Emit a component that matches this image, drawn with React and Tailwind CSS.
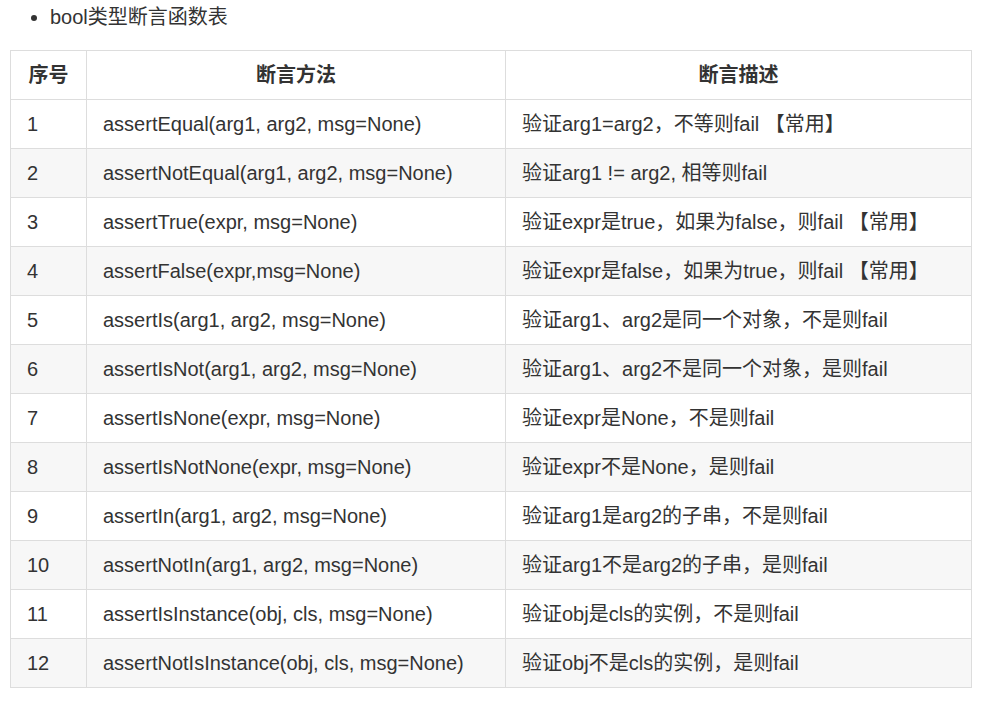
const rows = [
  ["1", "assertEqual(arg1, arg2, msg=None)", "验证arg1=arg2，不等则fail 【常用】"],
  ["2", "assertNotEqual(arg1, arg2, msg=None)", "验证arg1 != arg2, 相等则fail"],
  ["3", "assertTrue(expr, msg=None)", "验证expr是true，如果为false，则fail 【常用】"],
  ["4", "assertFalse(expr,msg=None)", "验证expr是false，如果为true，则fail 【常用】"],
  ["5", "assertIs(arg1, arg2, msg=None)", "验证arg1、arg2是同一个对象，不是则fail"],
  ["6", "assertIsNot(arg1, arg2, msg=None)", "验证arg1、arg2不是同一个对象，是则fail"],
  ["7", "assertIsNone(expr, msg=None)", "验证expr是None，不是则fail"],
  ["8", "assertIsNotNone(expr, msg=None)", "验证expr不是None，是则fail"],
  ["9", "assertIn(arg1, arg2, msg=None)", "验证arg1是arg2的子串，不是则fail"],
  ["10", "assertNotIn(arg1, arg2, msg=None)", "验证arg1不是arg2的子串，是则fail"],
  ["11", "assertIsInstance(obj, cls, msg=None)", "验证obj是cls的实例，不是则fail"],
  ["12", "assertNotIsInstance(obj, cls, msg=None)", "验证obj不是cls的实例，是则fail"],
];

export default function App() {
  return (
    <div
      className="bg-white text-[#333] min-h-screen"
      style={{ fontFamily: '"Liberation Sans", Arial, "Noto Sans CJK SC", sans-serif' }}
    >
      <ul className="list-disc pl-[50px] pt-[3px] text-[20px] leading-[28px]">
        <li>bool类型断言函数表</li>
      </ul>
      <div className="px-[10px] pt-[19px]">
        <table className="w-[962px] border-collapse text-[20px] border border-[#ddd]">
          <thead>
            <tr className="h-[49px]">
              <th className="w-[76px] border border-[#ddd] font-bold text-center">序号</th>
              <th className="w-[419px] border border-[#ddd] font-bold text-center">断言方法</th>
              <th className="border border-[#ddd] font-bold text-center">断言描述</th>
            </tr>
          </thead>
          <tbody>
            {rows.map((r, i) => (
              <tr key={r[0]} className={i % 2 === 1 ? "h-[49px] bg-[#f7f7f7]" : "h-[49px] bg-white"}>
                <td className="border border-[#ddd] px-4 py-0">{r[0]}</td>
                <td className="border border-[#ddd] px-4 py-0">{r[1]}</td>
                <td className="border border-[#ddd] px-4 py-0">{r[2]}</td>
              </tr>
            ))}
          </tbody>
        </table>
      </div>
    </div>
  );
}
